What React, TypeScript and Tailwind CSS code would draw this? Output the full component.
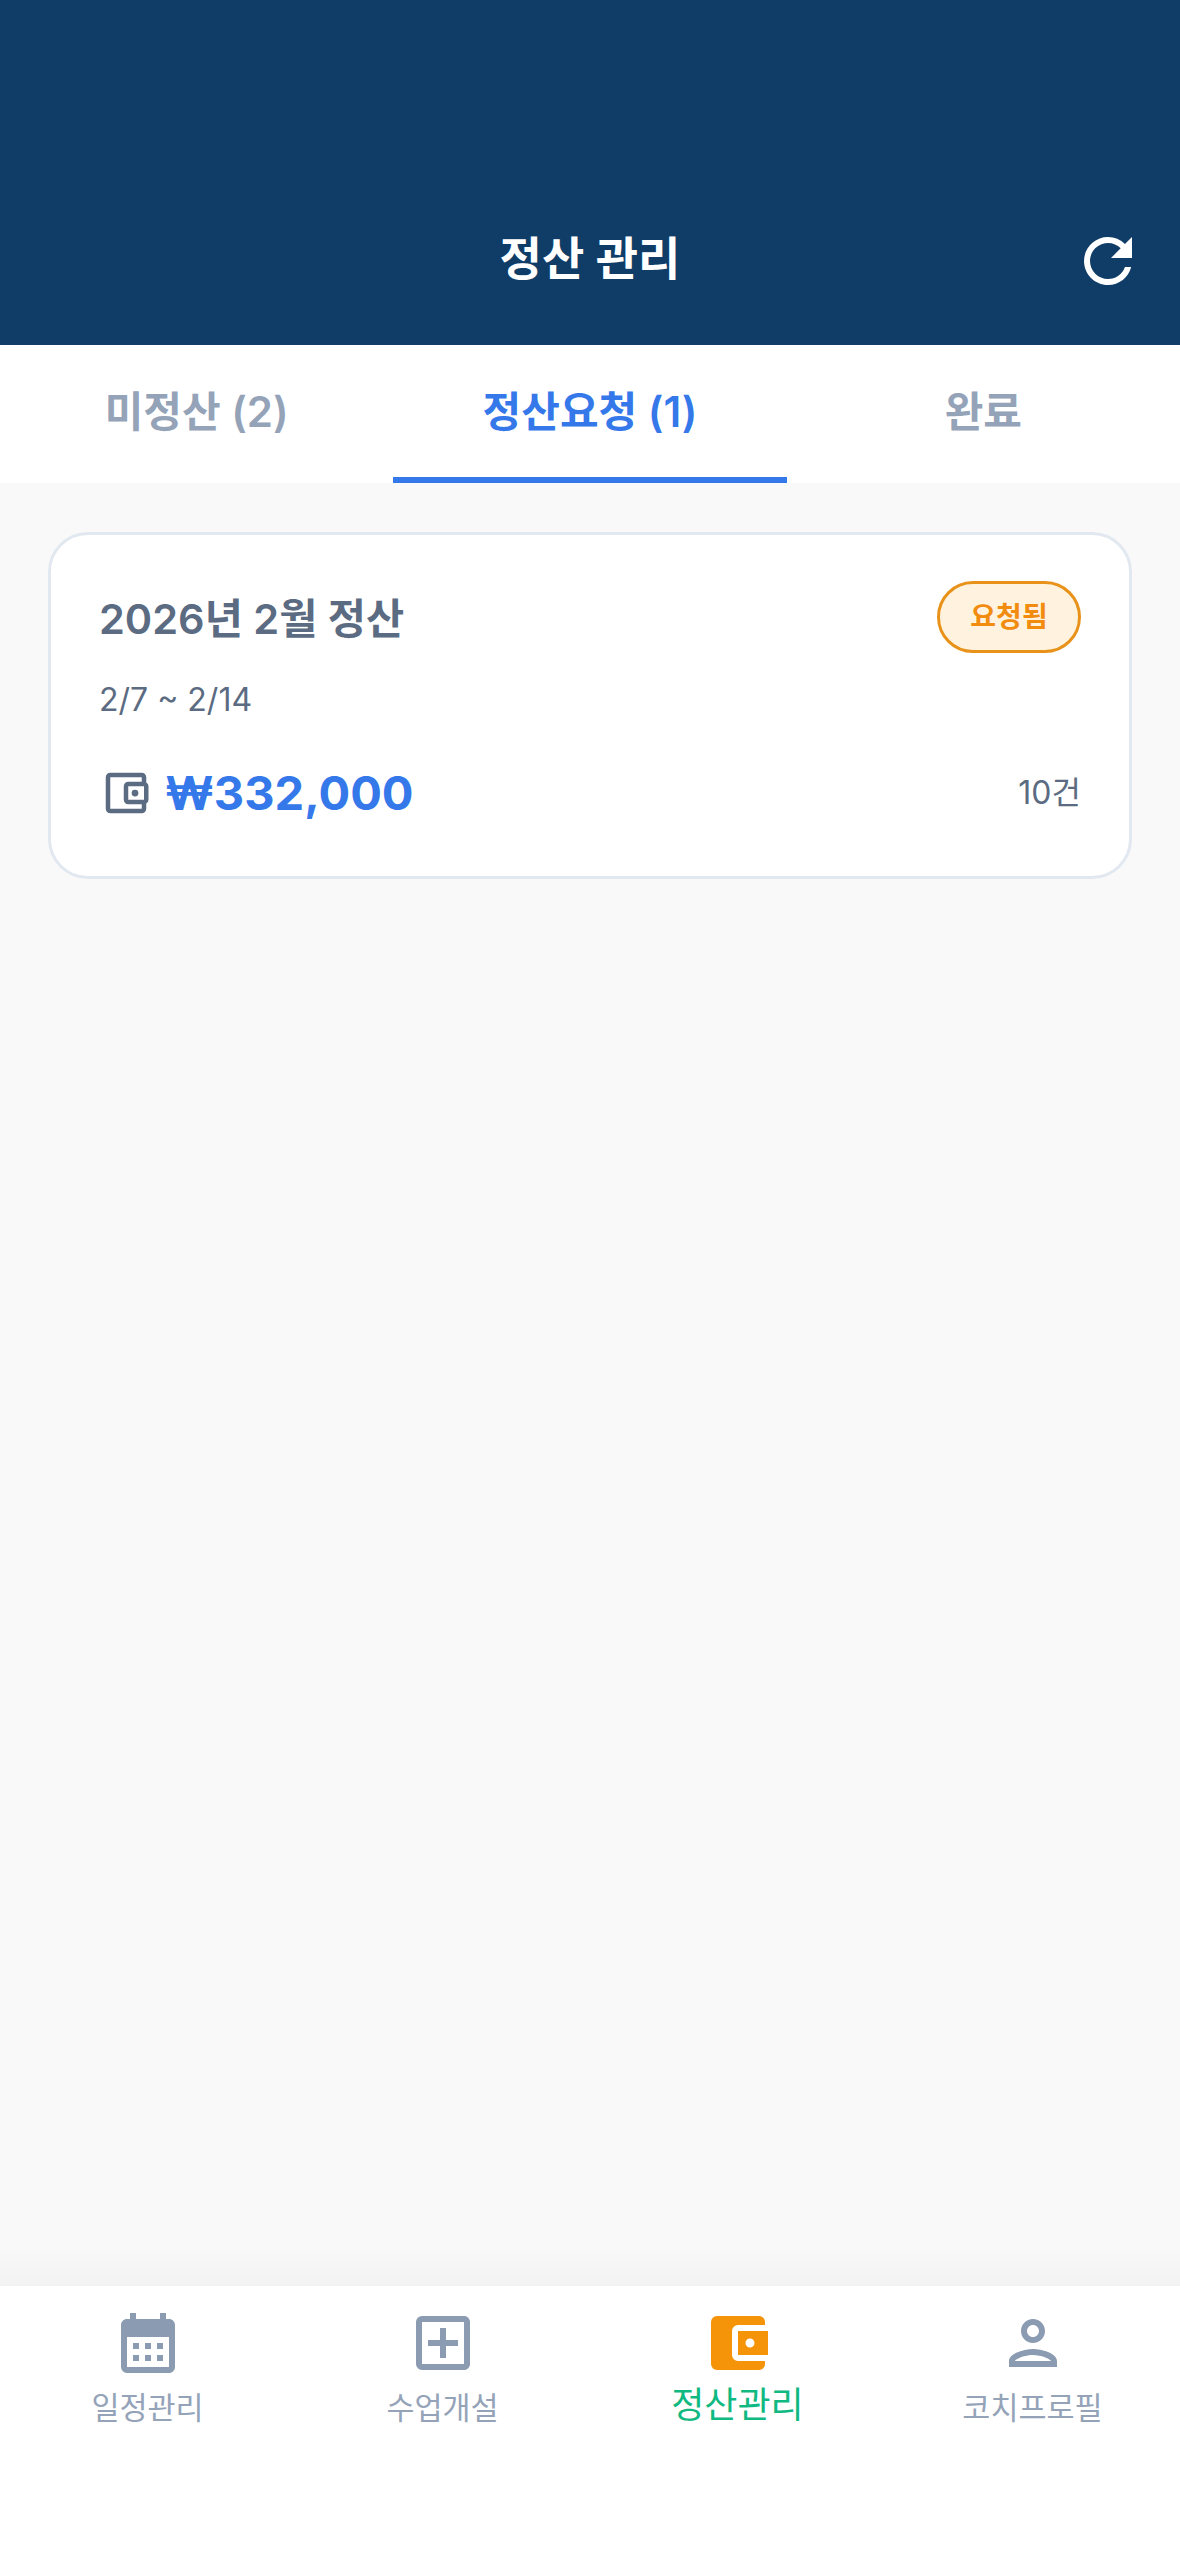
import {
  MdAccountBalanceWallet,
  MdCalendarMonth,
  MdOutlineAccountBalanceWallet,
  MdOutlineAddBox,
  MdOutlinePerson,
  MdRefresh,
} from 'react-icons/md'

const font = "font-['Inter','Noto_Sans_CJK_KR',sans-serif]"

const tabs = [
  { label: '미정산 (2)', active: false },
  { label: '정산요청 (1)', active: true },
  { label: '완료', active: false },
]

const navItems = [
  { label: '일정관리', Icon: MdCalendarMonth, active: false },
  { label: '수업개설', Icon: MdOutlineAddBox, active: false },
  { label: '정산관리', Icon: MdAccountBalanceWallet, active: true },
  { label: '코치프로필', Icon: MdOutlinePerson, active: false },
]

export default function App() {
  return (
    <div className={`${font} flex h-[2556px] w-[1180px] flex-col overflow-hidden bg-[#f9f9f9]`}>
      {/* Header */}
      <header className="flex h-[345px] shrink-0 items-end justify-between bg-[#0f3d68] px-[36px] pb-[48px] text-white">
        <div className="w-[72px]" />
        <h1 className="pb-[7px] text-[46px] font-semibold leading-[64px]">정산 관리</h1>
        <MdRefresh className="size-[72px]" />
      </header>

      {/* Tabs */}
      <nav className="grid h-[138px] shrink-0 grid-cols-3 bg-white">
        {tabs.map((tab) => (
          <div
            key={tab.label}
            className={
              tab.active
                ? 'flex items-center justify-center border-b-[6px] border-[#3478ea] text-[42px] font-semibold text-[#3478ea]'
                : 'flex items-center justify-center pb-[6px] text-[42px] font-semibold text-[#94a3b8]'
            }
          >
            {tab.label}
          </div>
        ))}
      </nav>

      {/* List */}
      <main className="min-h-0 flex-1 px-[48px] pt-[49px]">
        <div className="flex h-[347px] flex-col rounded-[40px] border-[3px] border-[#e2e8f0] bg-white px-[48px] pt-[46px]">
          <div className="flex items-center justify-between">
            <div className="pt-[3px] text-[41.5px] font-semibold leading-[60px] text-[#5b6b82]">2026년 2월 정산</div>
            <span className="flex h-[72px] w-[144px] items-center justify-center rounded-full border-[3px] border-[#e8921a] bg-[#fff3e0] text-[28px] font-semibold text-[#f28c0f]">
              요청됨
            </span>
          </div>
          <div className="mt-[23px] text-[32px] leading-[48px] text-[#5b6b82]">2/7 ~ 2/14</div>
          <div className="mt-[35px] flex items-center justify-between">
            <div className="flex items-center gap-[12px]">
              <MdOutlineAccountBalanceWallet className="size-[54px] text-[#5b6b82]" />
              <span className="text-[47px] font-bold leading-[68px] text-[#3478ea]">₩332,000</span>
            </div>
            <span className="text-[32px] leading-[48px] text-[#5b6b82]">10건</span>
          </div>
        </div>
      </main>

      {/* Bottom navigation */}
      <div className="h-[40px] shrink-0 bg-gradient-to-b from-[#f9f9f9] to-[#f3f3f3]" />
      <footer className="grid h-[270px] shrink-0 grid-cols-4 bg-white pt-[21px]">
        {navItems.map(({ label, Icon, active }) => (
          <div key={label} className="flex flex-col items-center">
            <Icon className={active ? 'size-[72px] text-[#f59409]' : 'size-[72px] text-[#8b9bb1]'} />
            <span
              className={
                active
                  ? 'mt-[1px] text-[36px] leading-[50px] text-[#10b981]'
                  : 'mt-[6px] text-[30.5px] leading-[46px] text-[#94a3b8]'
              }
            >
              {label}
            </span>
          </div>
        ))}
      </footer>
    </div>
  )
}
